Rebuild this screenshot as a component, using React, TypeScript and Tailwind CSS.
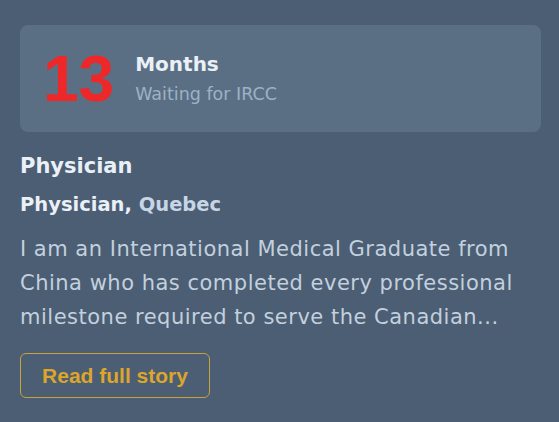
export default function App() {
  return (
    <div className="min-h-screen w-full bg-[#4b5e74] px-5 pt-[25px] font-['DejaVu_Sans',sans-serif]">
      {/* Waiting time */}
      <div className="flex h-[107px] w-[521px] items-center gap-[21px] rounded-lg bg-[#5b6f84] px-[23px]">
        <span className="font-['Liberation_Sans',sans-serif] text-[64px] leading-none font-bold text-[#ee2828]">
          13
        </span>
        <div className="flex flex-col">
          <span className="mb-[4px] text-[20px] leading-[26px] font-bold text-[#eaf0f6]">Months</span>
          <span className="text-[17.5px] leading-[26px] text-[#9eb1c6]">Waiting for IRCC</span>
        </div>
      </div>

      <h2 className="mt-[20px] text-[21px] leading-[28px] font-bold text-[#eaf0f6]">Physician</h2>
      <h3 className="mt-[12px] text-[19.5px] leading-[26px] font-bold text-[#eaf0f6]">
        Physician, <span className="text-[#c8d5e4]">Quebec</span>
      </h3>

      <p className="mt-[14px] text-[21px] leading-[34px] tracking-[0.5px] text-[#c3d0de]">
        I am an International Medical Graduate from China who has completed every professional
        milestone required to serve the Canadian...
      </p>

      <button className="mt-[19px] h-[45px] w-[190px] rounded-md border border-[#c9a23a] font-['Liberation_Sans',sans-serif] text-[21px] font-bold text-[#dca52b]">
        Read full story
      </button>
    </div>
  );
}
